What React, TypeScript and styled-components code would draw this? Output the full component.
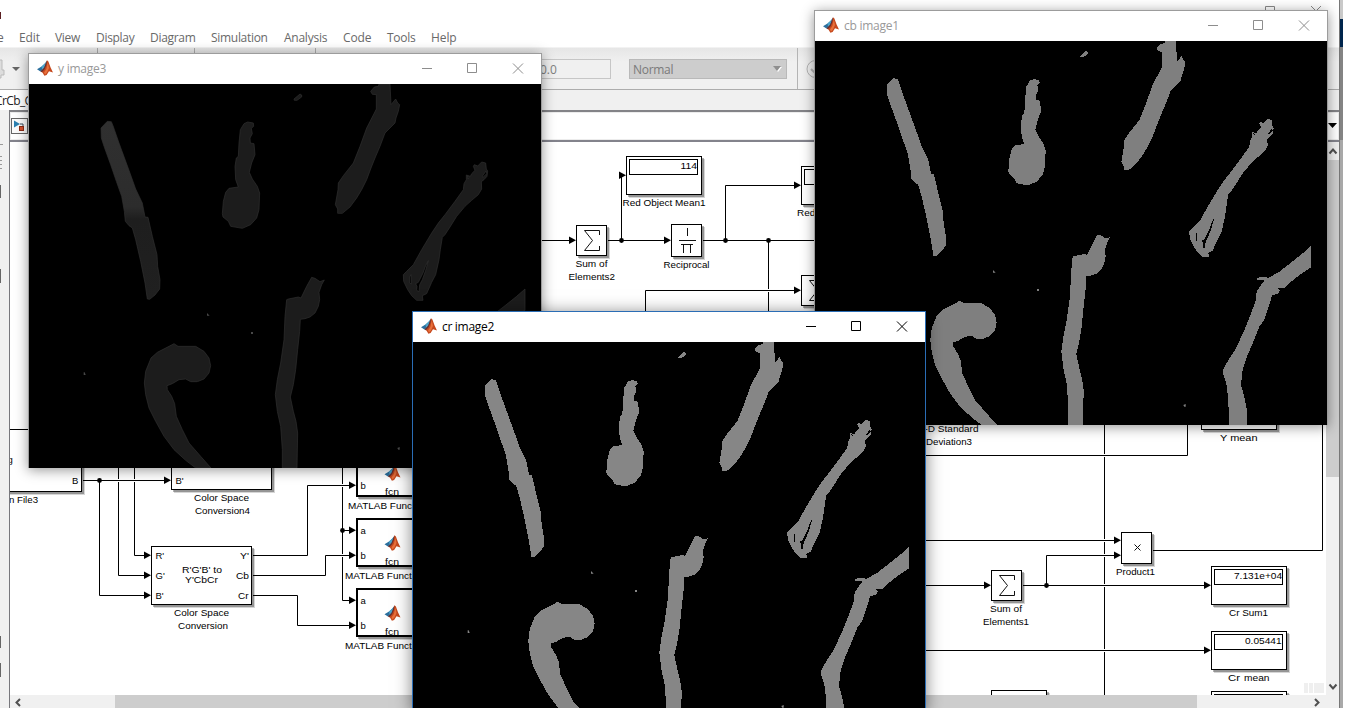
import React from 'react';
import styled, { createGlobalStyle } from 'styled-components';

const Global = createGlobalStyle`
  * { box-sizing: border-box; }
  body { margin: 0; background: #fff; font-family: "Open Sans", "Noto Sans", sans-serif; font-size: 12px; }
`;

const Desktop = styled.div`
  position: relative;
  width: 1366px;
  height: 708px;
  overflow: hidden;
  background: #fff;
`;

/* ---------- Simulink editor ---------- */

const Editor = styled.div`
  display: flex;
  width: 1343px;
  height: 708px;
`;
const EditorMain = styled.div`
  width: 1339px;
  display: flex;
  flex-direction: column;
`;
const Backdrop = styled.div`
  width: 4px;
  display: flex;
  flex-direction: column;
  border-left: 1px solid #777;
  background: #a9a9a9;
`;
const BackdropPart = styled.div<{ $h: number; $c: string }>`
  height: ${(p) => p.$h}px;
  background: ${(p) => p.$c};
`;
const EditorTitle = styled.div`
  height: 28px;
  display: flex;
  justify-content: space-between;
`;
const MenuBar = styled.div`
  height: 19px;
  display: flex;
  align-items: center;
  color: #696969;
  overflow: hidden;
`;
const MenuItem = styled.span<{ $w: number; $ls?: number }>`
  flex: 0 0 ${(p) => p.$w}px;
  letter-spacing: ${(p) => p.$ls ?? 0}px;
  line-height: 20px;
  white-space: nowrap;
`;
const Toolbar = styled.div`
  height: 43px;
  display: flex;
  align-items: center;
  background: linear-gradient(#e6e6e6, #f0f0f0 14px);
  border-top: 1px solid #f2f2f2;
  border-bottom: 1px solid #acacac;
`;
const ToolIcons = styled.svg`
  display: block;
  flex: none;
`;
const TimeField = styled.div`
  width: 101px;
  height: 20px;
  border: 1px solid #c6c6c6;
  background: #f0f0f0;
  color: #808080;
  line-height: 20px;
  padding-left: 29px;
`;
const ModeSelect = styled.div`
  width: 158px;
  height: 20px;
  margin-left: 18px;
  padding: 1px 4px 0 3px;
  border: 1px solid #b9b9b9;
  background: #cdcdcd;
  color: #7a7a7a;
  letter-spacing: -0.3px;
  display: flex;
  align-items: center;
  justify-content: space-between;
`;
const ToolSeparator = styled.div`
  width: 1px;
  height: 41px;
  margin: 0 8px 0 10px;
  background: #b4b4b4;
`;
const TabRow = styled.div`
  height: 20px;
  background: #f0f0f0;
  overflow: hidden;
`;
const Tab = styled.div`
  width: 60px;
  height: 20px;
  text-indent: -5px;
  letter-spacing: -0.6px;
  line-height: 21px;
  background: #fff;
  color: #222;
`;
const Body = styled.div`
  flex: 1;
  display: flex;
  min-height: 0;
`;
const Palette = styled.div`
  width: 9px;
  background: #f0f0f0;
`;
const Work = styled.div`
  width: 1330px;
  display: flex;
  flex-direction: column;
  border-left: 1px solid #77777c;
`;
const Breadcrumb = styled.div`
  height: 32px;
  padding: 0 1px;
  display: flex;
  align-items: center;
  justify-content: space-between;
  border-top: 2px solid #838387;
  border-bottom: 2px solid #83838c;
  background: #fff;
  box-shadow: inset 0 0 0 1px #ececec;
`;
const CanvasRow = styled.div`
  height: 553px;
  display: flex;
`;
const VScroll = styled.div`
  width: 13px;
  display: flex;
  flex-direction: column;
  justify-content: space-between;
  background: #f0f0f0;
`;
const VThumb = styled.div`
  height: 317px;
  margin-bottom: 201px;
  background: #cdcdcd;
`;
const HScroll = styled.div`
  height: 13px;
  display: flex;
  align-items: center;
  background: #f0f0f0;
`;
const HThumb = styled.div`
  width: 1082px;
  height: 13px;
  margin: 0 114px 0 92px;
  background: #cdcdcd;
`;
const Glyph = styled.svg`
  display: block;
  flex: none;
`;
const Label = styled.text`
  font: 9.5px "Liberation Sans", Arial, sans-serif;
  fill: #000;
`;

function T({ x, y, w, children }: { x: number; y: number; w?: number; children: string }) {
  return (
    <Label x={x} y={y} textLength={w} lengthAdjust="spacingAndGlyphs">
      {children}
    </Label>
  );
}

function MatlabMark({ x = 0, y = 0 }: { x?: number; y?: number }) {
  return (
    <g transform={`translate(${x} ${y})`}>
      <path d="M0 9.2 4.5 6.6 6 5.2 7.6 3.8 10 1 8.6 6 5.4 11.2 3.4 11.6Z" fill="#2b6f9e" />
      <path d="M4.5 6.6 7.6 3.8 10 1 8.4 6 5.2 10Z" fill="#4aa3c9" />
      <path d="M10 .2 8.8 3.6 7.4 7.4 3.6 11.6 5.6 12.8 7.4 15.8 9.6 15 12 11.2 16 12.4 13.6 7.4 11.4 1.4Z" fill="#c5481d" />
      <path d="M10 .2 8.8 3.2 7 8 3.6 11.6 5 12 7.6 9.2 9.4 5Z" fill="#5c3036" />
      <path d="M10.8 2.4 12 8 10 12.4 8 14.6 7 12.6 9.4 9Z" fill="#e8703c" />
    </g>
  );
}

function Block({ x, y, w, h, thick = 1 }: { x: number; y: number; w: number; h: number; thick?: number }) {
  return (
    <g>
      <rect x={x + 3} y={y + 3} width={w} height={h} fill="#000" opacity=".16" />
      <rect x={x + 2} y={y + 2} width={w} height={h} fill="#000" opacity=".3" />
      <rect x={x + thick / 2} y={y + thick / 2} width={w - thick} height={h - thick} fill="#fff" stroke="#000" strokeWidth={thick} />
    </g>
  );
}

function Display({ x, y, value, vx, vw }: { x: number; y: number; value?: string; vx?: number; vw?: number }) {
  return (
    <g>
      <Block x={x} y={y} w={76} h={39} />
      <rect x={x + 3.5} y={y + 3.5} width={68} height={15} fill="#fff" stroke="#000" />
      {value && <T x={vx!} y={y + 13} w={vw}>{value}</T>}
    </g>
  );
}

function Sum({ x, y }: { x: number; y: number }) {
  return (
    <g>
      <Block x={x} y={y} w={31} h={31} />
      <path d={`M${x + 23.5} ${y + 10}v-4.500h-15l8 10-8 10h15v-4.500`} fill="none" stroke="#111" />
    </g>
  );
}

function Arrow({ x, y }: { x: number; y: number }) {
  return <path d={`M${x - 7} ${y - 3.5}L${x} ${y + 0.3}L${x - 7} ${y + 4}Z`} fill="#000" />;
}

function Fcn({ y, hasA = true, lx }: { y: number; hasA?: boolean; lx: number }) {
  return (
    <g>
      <Block x={356} y={y} w={72} h={49} thick={2} />
      {hasA && <T x={360.5} y={y + 15.5}>a</T>}
      <T x={360.5} y={y + 40.5}>b</T>
      <MatlabMark x={384.5} y={y + 17} />
      <T x={385} y={y + 46.5} w={14}>fcn</T>
      <T x={lx} y={y + 60.5} w={80}>MATLAB Function</T>
    </g>
  );
}

const wires = [
  'M541 240.5H571', 'M608 240.5H665', 'M621.5 240V175.5', 'M703 240.5H830', 'M725.5 240V185.5H795',
  'M768.5 240V289M768.5 292V320', 'M645.5 320V290.5H795',
  'M83 480.5H165', 'M99.5 480V595.5H145', 'M118.5 460V479M118.5 482V575.5H145', 'M134.5 460V479M134.5 482V555.5H145',
  'M253 555.5H307.5V485.5H350', 'M253 575.5H325.5V555.5H350', 'M253 595.5H297.5V625.5H350',
  'M342.5 460V484M342.5 487V554M342.5 557V600.5H350', 'M342.5 530.5H350',
  'M900 455.5H1187.5V420', 'M900 540.5H1115', 'M1046.5 585V555.5H1115', 'M900 585.5H985', 'M1023 585.5H1205',
  'M900 650.5H1205', 'M1153 550.5H1322.5V420',
  'M1104.5 420V454M1104.5 457V539M1104.5 542V554M1104.5 557V584M1104.5 587V649M1104.5 652V695',
];
const arrows: [number, number][] = [
  [576, 240], [671, 240], [626, 175], [801, 185], [801, 290], [171, 480], [151, 595], [151, 575], [151, 555],
  [356, 485], [356, 530], [356, 555], [356, 600], [356, 625], [1121, 540], [1121, 555], [991, 585], [1211, 585], [1211, 650],
];
const dots: [number, number][] = [
  [621.5, 240.5], [725.5, 240.5], [768.5, 240.5], [99.5, 480.5], [342.5, 530.5], [1046.5, 585.5],
];

function Diagram() {
  return (
    <Glyph width="1316" height="553" viewBox="10 142 1316 553">
      <rect x="10" y="142" width="1316" height="553" fill="#fff" />
      {wires.map((d) => <path key={d} d={d} fill="none" stroke="#000" />)}
      {arrows.map(([x, y]) => <Arrow key={`${x}-${y}`} x={x} y={y} />)}
      {dots.map(([x, y]) => <circle key={`${x}-${y}`} cx={x} cy={y} r="2.4" />)}

      <Display x={626} y={156} value="114" vx={680.5} vw={16.5} />
      <T x={622.5} y={206} w={83}>Red Object Mean1</T>
      <Sum x={576} y={225} />
      <T x={575.5} y={267} w={32}>Sum of</T>
      <T x={568.5} y={280} w={46.5}>Elements2</T>
      <Block x={671} y={224} w={31} h={33} />
      <path d="M687.500 228v8M679 240.500h17M681 244.500h12M683.500 244v9M690.500 244v9" fill="none" stroke="#111" />
      <T x={663.5} y={268} w={46}>Reciprocal</T>
      <Display x={801} y={166} />
      <T x={797} y={216} w={83}>Red Object Mean2</T>
      <Sum x={801} y={275} />
      <T x={801.5} y={317} w={32}>Sum of</T>

      <Block x={-60} y={429} w={142} h={63} />
      <T x={7.5} y={463}>g</T>
      <T x={72} y={483.5}>B</T>
      <T x={9} y={503} w={29}>n File3</T>
      <Block x={171} y={430} w={101} h={60} />
      <T x={175.5} y={483.5}>B'</T>
      <T x={194} y={501} w={55}>Color Space</T>
      <T x={195} y={514} w={55}>Conversion4</T>
      <Block x={151} y={546} w={101} h={59} />
      <T x={155.5} y={558.5}>R'</T>
      <T x={155.5} y={578.5}>G'</T>
      <T x={155.5} y={598.5}>B'</T>
      <T x={240} y={558.5} w={9}>Y'</T>
      <T x={236} y={578.5} w={13}>Cb</T>
      <T x={238} y={598.5} w={10.5}>Cr</T>
      <T x={182} y={573} w={40}>R'G'B' to</T>
      <T x={185} y={583} w={33}>Y'CbCr</T>
      <T x={174} y={616} w={55}>Color Space</T>
      <T x={178} y={629} w={50}>Conversion</T>
      <Fcn y={448} hasA={false} lx={348} />
      <Fcn y={518} lx={345} />
      <Fcn y={588} lx={345} />

      <T x={924.5} y={432} w={54}>-D Standard</T>
      <T x={926} y={445} w={46}>Deviation3</T>
      <Display x={1201} y={391} />
      <T x={1220} y={441} w={37.5}>Y mean</T>
      <Block x={1121} y={532} w={31} h={32} />
      <path d="M1134.500 544.500l6 6M1140.500 544.500l-6 6" stroke="#111" />
      <T x={1116} y={575} w={39}>Product1</T>
      <Sum x={991} y={570} />
      <T x={990} y={612} w={32}>Sum of</T>
      <T x={983} y={625} w={46}>Elements1</T>
      <Display x={1211} y={566} value="7.131e+04" vx={1234} vw={48} />
      <T x={1229} y={616} w={39}>Cr Sum1</T>
      <Display x={1211} y={631} value="0.05441" vx={1245} vw={36.5} />
      <T x={1228} y={681} w={12}>Cr</T>
      <T x={1244} y={681} w={25.5}>mean</T>
      <Block x={991} y={690} w={56} h={30} />
      <Display x={1211} y={691} />
      <path d="M1304 683h4v10h-4zM1309 683h4v10h-4zM1314 683h10v10h-10z" fill="#efefef" />
    </Glyph>
  );
}

/* ---------- Figure windows ---------- */

const Figure = styled.section<{ $x: number; $y: number; $active?: boolean }>`
  position: absolute;
  left: ${(p) => p.$x}px;
  top: ${(p) => p.$y}px;
  width: 514px;
  border: 1px solid ${(p) => (p.$active ? '#2a6db5' : '#9c9c9c')};
  border-bottom-width: 0;
  background: #000;
  color: ${(p) => (p.$active ? '#000' : '#999')};
  box-shadow: 0 2px ${(p) => (p.$active ? 16 : 12)}px rgba(0, 0, 0, ${(p) => (p.$active ? 0.5 : 0.42)});
`;
const FigureTitle = styled.header`
  height: 30px;
  padding-left: 8px;
  display: flex;
  align-items: center;
  background: #fff;
`;
const FigureName = styled.span<{ $ls: number }>`
  flex: 1;
  padding-left: 5px;
  letter-spacing: ${(p) => p.$ls}px;
  line-height: 30px;
`;
const Picture = styled.svg`
  display: block;
`;

const stick = '216,135 235,115 247,116 252,128 270,180 300,262 320,318 340,360 348,402 357,403 370,460 384,515 386,550 393,590 392,618 378,636 362,649 355,648 348,600 335,535 320,470 310,435 300,428 289,415 286,385 278,340 262,295 245,245 225,190 217,165';
const shapes = [
  '634,140 645,122 656,117 673,120 674,130 667,136 670,152 663,165 664,180 675,182 678,215 668,240 661,268 670,288 685,310 692,330 690,380 683,405 665,425 640,436 605,430 598,415 582,402 580,392 583,355 590,328 600,316 628,312 620,290 618,250 622,225 628,220 630,180',
  '366,825 385,808 420,790 435,782 447,790 500,790 525,805 540,825 545,848 540,870 525,888 505,896 485,896 470,888 450,890 430,902 414,908 415,920 428,940 437,962 442,1000 460,1040 480,1080 515,1120 546,1155 500,1155 470,1132 435,1100 405,1060 380,1015 360,975 350,935 346,900 350,865',
  '848,583 858,586 873,596 886,591 878,605 870,628 872,650 868,670 858,690 843,702 828,707 814,709 812,745 806,800 800,860 793,905 784,942 793,985 801,1015 806,1050 804,1155 760,1155 760,1100 755,1030 745,985 739,935 745,890 755,840 765,770 768,700 773,650 778,648 808,642 816,645 833,610',
  '1025,25 1036,12 1048,10 1050,3 1083,3 1086,65 1100,48 1106,60 1112,65 1108,85 1101,105 1098,120 1068,150 1053,190 1038,225 1026,255 1013,290 998,320 983,345 963,372 940,391 926,391 926,378 919,365 927,320 928,300 943,278 973,240 993,190 1013,135 1036,90 1042,78 1042,35 1030,34',
  '795,48 813,33 818,36 818,42 804,52 796,52',
  '1326,716 1333,711 1353,710 1360,714 1393,695 1428,668 1463,640 1488,618 1488,682 1458,702 1428,725 1408,745 1390,745 1395,752 1388,762 1371,765 1366,785 1348,840 1333,860 1313,910 1298,945 1293,960 1283,990 1278,1035 1288,1070 1296,1110 1295,1155 1242,1155 1240,1080 1234,1030 1224,1000 1226,985 1243,955 1263,925 1288,870 1308,820 1323,780 1325,755 1338,735 1351,722 1328,720',
];
const specks = ['534,690 542,698 534,698', '666,747 672,747 672,753 666,753', '164,868 167,868 170,876 164,876', '1105,1095 1112,1092 1112,1100 1108,1100'];
const fork =
  'M1350 245 1358 237 1370 240 1372 258 1376 264 1374 280 1365 290 1357 296 1358 318 1348 335 1328 352 1308 370 1283 400 1263 432 1248 455 1240 463 1234 500 1230 530 1220 575 1208 598 1193 632 1180 638 1182 652 1163 652 1148 638 1136 620 1124 595 1123 575 1133 565 1153 545 1178 500 1208 450 1228 420 1248 395 1278 355 1303 320 1305 302 1312 290 1312 276 1324 280 1328 272 1338 262 1333 250 1336 245 1346 249Z' +
  'M1198 533 1190 548 1182 570 1168 598 1160 602 1164 610 1163 622 1170 626 1172 605 1180 590 1190 562ZM1142 582 1146 575 1147 603 1142 600ZM1371 264 1373 272 1362 283 1360 280ZM1315 279 1320 283 1317 288Z';

function Roots({ id, tone, dark, h }: { id: string; tone: string; dark?: boolean; h: number }) {
  const edge = dark ? '#303030' : 'none';
  return (
    <Picture width="512" height={h} viewBox={`0 3 1536 ${h * 3}`}>
      <defs>
        <linearGradient id={id} x1="0" y1="0" x2="0" y2="1">
          <stop offset="0" stopColor={dark ? '#303030' : tone} />
          <stop offset=".48" stopColor={dark ? '#2c2c2c' : tone} />
          <stop offset=".55" stopColor={dark ? '#1e1e1e' : tone} />
          <stop offset="1" stopColor={dark ? '#202020' : tone} />
        </linearGradient>
      </defs>
      <g fill={tone} stroke={edge} strokeWidth="2" shapeRendering={dark ? 'auto' : 'crispEdges'}>
        <polygon points={stick} fill={`url(#${id})`} />
        {shapes.map((s) => <polygon key={s} points={s} />)}
        <path d={fork} fillRule="evenodd" />
      </g>
      <g fill={dark ? '#484848' : tone}>
        {specks.map((s) => <polygon key={s} points={s} />)}
      </g>
    </Picture>
  );
}

function FigureWindow(p: { x: number; y: number; title: string; ls: number; tone: string; active?: boolean; dark?: boolean; h?: number }) {
  const c = p.active ? '#000' : '#8d8d8d';
  return (
    <Figure $x={p.x} $y={p.y} $active={p.active}>
      <FigureTitle>
        <Glyph width="16" height="18"><MatlabMark /></Glyph>
        <FigureName $ls={p.ls}>{p.title}</FigureName>
        <Glyph width="138" height="30" fill="none" stroke={c}>
          <path d="M19 14.500h10" />
          <path d="M64.500 9.500h9v9h-9z" />
          <path d="M110 9.500l10 10M120 9.500l-10 10" />
        </Glyph>
      </FigureTitle>
      <Roots id={p.title.replace(' ', '-')} tone={p.tone} dark={p.dark} h={p.h ?? 384} />
    </Figure>
  );
}

const menus: [string, number, number][] = [
  ['Edit', 36, -0.1], ['View', 41, -0.3], ['Display', 54, -0.3], ['Diagram', 61, -0.3], ['Simulation', 73, -0.3],
  ['Analysis', 59, -0.25], ['Code', 44, -0.1], ['Tools', 44, -0.3], ['Help', 40, -0.1],
];

export default function App() {
  return (
    <>
      <Global />
      <Desktop>
        <Editor>
          <EditorMain>
            <EditorTitle>
              <Glyph width="6" height="28"><rect y="12" width="1" height="7" fill="#5b1f22" /></Glyph>
              <Glyph width="80" height="28" fill="none" stroke="#888">
                <path d="M6.500 6.500h9v9h-9zM52 6l10 10M62 6l-10 10" />
              </Glyph>
            </EditorTitle>
            <MenuBar>
              <MenuItem $w={19}><span style={{ marginLeft: -3 }}>e</span></MenuItem>
              {menus.map(([name, w, ls]) => <MenuItem key={name} $w={w} $ls={ls}>{name}</MenuItem>)}
            </MenuBar>
            <Toolbar>
              <ToolIcons width="510" height="41">
                <path d="M0 12h2v10h2v5h-3v3h-1" fill="#ddd" stroke="#bbb" />
                <path d="M12 19h8l-4 4z" fill="#666" />
                <path d="M97.500 0v6M194.500 0v6M315.500 0v6" stroke="#aaa" />
              </ToolIcons>
              <TimeField>0.0</TimeField>
              <ModeSelect>
                <span>Normal</span>
                <Glyph width="9" height="6"><path d="M1 1h8L5 6z" fill="#fff" /><path d="M0 0h8L4 5z" fill="#8f8f8f" /></Glyph>
              </ModeSelect>
              <ToolSeparator />
              <Glyph width="20" height="20" fill="none" stroke="#b5b5b5">
                <circle cx="9.500" cy="10" r="8.500" /><path d="M5 10l4 4 5-7" strokeWidth="2" />
              </Glyph>
            </Toolbar>
            <TabRow><Tab>CrCb_C</Tab></TabRow>
            <Body>
              <Palette>
                <Glyph width="9" height="598">
                  <path d="M0 34.500h3M0 46.500h2M0 50.500h2M0 54.500h2M0 58.500h2" stroke="#999" />
                  <path d="M.5 75v13M.5 159v14M.5 526v12M.5 553v14" stroke="#666" />
                </Glyph>
              </Palette>
              <Work>
                <Breadcrumb>
                  <Glyph width="17" height="18">
                    <rect x=".5" y="1.500" width="16" height="15" fill="#fbfbfb" stroke="#666" />
                    <path d="M3 3.500l6 3.500-6 3.500z" fill="#2b7fb0" />
                    <path d="M9 7h3v3" fill="none" stroke="#345" />
                    <rect x="8.500" y="9.500" width="4" height="4" fill="#d8502c" stroke="#8a2b14" />
                  </Glyph>
                  <Glyph width="11" height="8"><path d="M1 1h9L5.500 6z" /></Glyph>
                </Breadcrumb>
                <CanvasRow>
                  <Diagram />
                  <VScroll>
                    <Glyph width="13" height="18"><path d="M3.500 11.500l3.500-4 3.500 4" fill="none" stroke="#505050" strokeWidth="2" /></Glyph>
                    <VThumb />
                    <Glyph width="13" height="17"><path d="M3.500 6.500l3.500 4 3.500-4" fill="none" stroke="#505050" strokeWidth="2" /></Glyph>
                  </VScroll>
                </CanvasRow>
                <HScroll>
                  <Glyph width="13" height="13"><path d="M10 4L6.500 7.500 10 11" fill="none" stroke="#505050" strokeWidth="2" /></Glyph>
                  <HThumb />
                  <Glyph width="13" height="13"><path d="M4 4L7.500 7.500 4 11" fill="none" stroke="#505050" strokeWidth="2" /></Glyph>
                </HScroll>
              </Work>
            </Body>
          </EditorMain>
          <Backdrop>
            <BackdropPart $h={19} $c="#c9c9c9" />
            <BackdropPart $h={28} $c="#00264d" />
            <BackdropPart $h={93} $c="#858585" />
          </Backdrop>
        </Editor>
        <FigureWindow x={28} y={53} title="y image3" ls={-0.25} tone="#1c1c1c" dark />
        <FigureWindow x={814} y={10} title="cb image1" ls={-0.25} tone="#7f7f7f" />
        <FigureWindow x={412} y={311} title="cr image2" ls={-0.3} tone="#868686" active h={370} />
      </Desktop>
    </>
  );
}
